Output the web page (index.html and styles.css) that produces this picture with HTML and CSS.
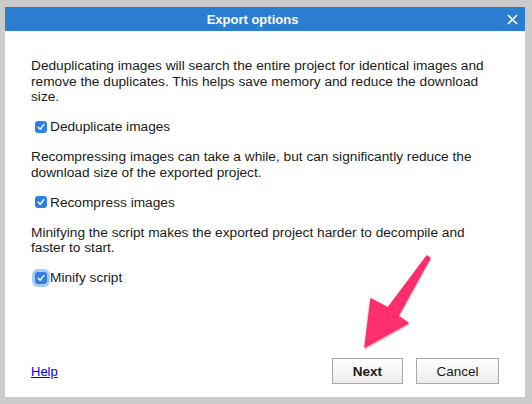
FILE: index.html
```html
<!DOCTYPE html>
<html>
<head>
<meta charset="utf-8">
<link rel="stylesheet" href="styles.css">
</head>
<body>
<div class="dialog">
  <div class="titlebar">
    <div class="title">Export options</div>
    <div class="close">
      <svg width="11" height="11" viewBox="0 0 11 11"><path d="M1 1 L10 10 M10 1 L1 10" stroke="#fff" stroke-width="1.6" fill="none"/></svg>
    </div>
  </div>
  <div class="content">
    <p class="desc">Deduplicating images will search the entire project for identical images and remove the duplicates. This helps save memory and reduce the download size.</p>
    <label class="check"><span class="box"><svg width="8" height="8" viewBox="0 0 8 8"><path d="M1.2 4.2 L3.2 6.2 L6.8 1.6" stroke="#fff" stroke-width="1.5" fill="none" stroke-linecap="round" stroke-linejoin="round"/></svg></span>Deduplicate images</label>
    <p class="desc">Recompressing images can take a while, but can significantly reduce the download size of the exported project.</p>
    <label class="check"><span class="box"><svg width="8" height="8" viewBox="0 0 8 8"><path d="M1.2 4.2 L3.2 6.2 L6.8 1.6" stroke="#fff" stroke-width="1.5" fill="none" stroke-linecap="round" stroke-linejoin="round"/></svg></span>Recompress images</label>
    <p class="desc">Minifying the script makes the exported project harder to decompile and faster to start.</p>
    <label class="check"><span class="box focus"><svg width="8" height="8" viewBox="0 0 8 8"><path d="M1.2 4.2 L3.2 6.2 L6.8 1.6" stroke="#fff" stroke-width="1.5" fill="none" stroke-linecap="round" stroke-linejoin="round"/></svg></span>Minify script</label>
  </div>
  <div class="footer">
    <a class="help" href="#">Help</a>
    <div class="buttons">
      <button class="btn next">Next</button>
      <button class="btn">Cancel</button>
    </div>
  </div>
</div>
<svg class="arrow" width="532" height="404" viewBox="0 0 532 404">
  <defs>
    <filter id="sh" x="-20%" y="-20%" width="140%" height="140%">
      <feDropShadow dx="0" dy="1" stdDeviation="1.2" flood-color="#000" flood-opacity="0.35"/>
    </filter>
  </defs>
  <polygon points="427,256 430,258 398,316 408,323 365,347 371,299 388,308" fill="#ff2d6c" stroke="#ff2d6c" stroke-width="1.5" stroke-linejoin="round" filter="url(#sh)"/>
</svg>
</body>
</html>
```
FILE: styles.css
```css
html, body {
  margin: 0;
  padding: 0;
}
body {
  background: #cbcbcb;
  width: 532px;
  height: 404px;
  padding: 7px 7px 7px 5px;
  box-sizing: border-box;
  font-family: "Liberation Sans", Arial, sans-serif;
  font-size: 13.7px;
  color: #1a1a1a;
  position: relative;
}
.dialog {
  width: 520px;
  height: 390px;
  background: #fff;
  display: flex;
  flex-direction: column;
}
.titlebar {
  height: 24px;
  background: #2b7dcf;
  display: flex;
  align-items: center;
  color: #fff;
}
.title {
  flex: 1;
  text-align: center;
  font-weight: bold;
  font-size: 13px;
}
.close {
  width: 25px;
  display: flex;
  justify-content: center;
  align-items: center;
}
.close svg { display: block; }
.content {
  flex: 1;
  padding: 27px 26px 0 26px;
  display: flex;
  flex-direction: column;
  align-items: flex-start;
  gap: 14.5px;
}
.desc {
  margin: 0;
  line-height: 15.5px;
}
.check {
  display: flex;
  align-items: center;
  line-height: 15.5px;
  padding-left: 4px;
}
.box {
  width: 12px;
  height: 12px;
  border-radius: 3px;
  background: #2f80e6;
  display: flex;
  align-items: center;
  justify-content: center;
  margin-right: 3px;
}
.box svg { display: block; }
.box.focus {
  box-shadow: 0 0 0 3px rgba(90, 160, 245, 0.55);
}
.footer {
  display: flex;
  align-items: center;
  justify-content: space-between;
  padding: 0 26px 13px 26px;
}
.help {
  color: #0000ee;
  text-decoration: underline;
  font-size: 13px;
}
.buttons {
  display: flex;
  gap: 13px;
}
.btn {
  height: 26px;
  border: 1px solid #a8a8a8;
  background: linear-gradient(#ffffff, #ebebeb);
  font-family: "Liberation Sans", Arial, sans-serif;
  font-size: 13.5px;
  color: #1a1a1a;
  padding: 0;
  width: 83px;
  border-radius: 0;
}
.btn.next {
  width: 71px;
  font-weight: bold;
}
.arrow {
  position: absolute;
  left: 0;
  top: 0;
  pointer-events: none;
}
```
